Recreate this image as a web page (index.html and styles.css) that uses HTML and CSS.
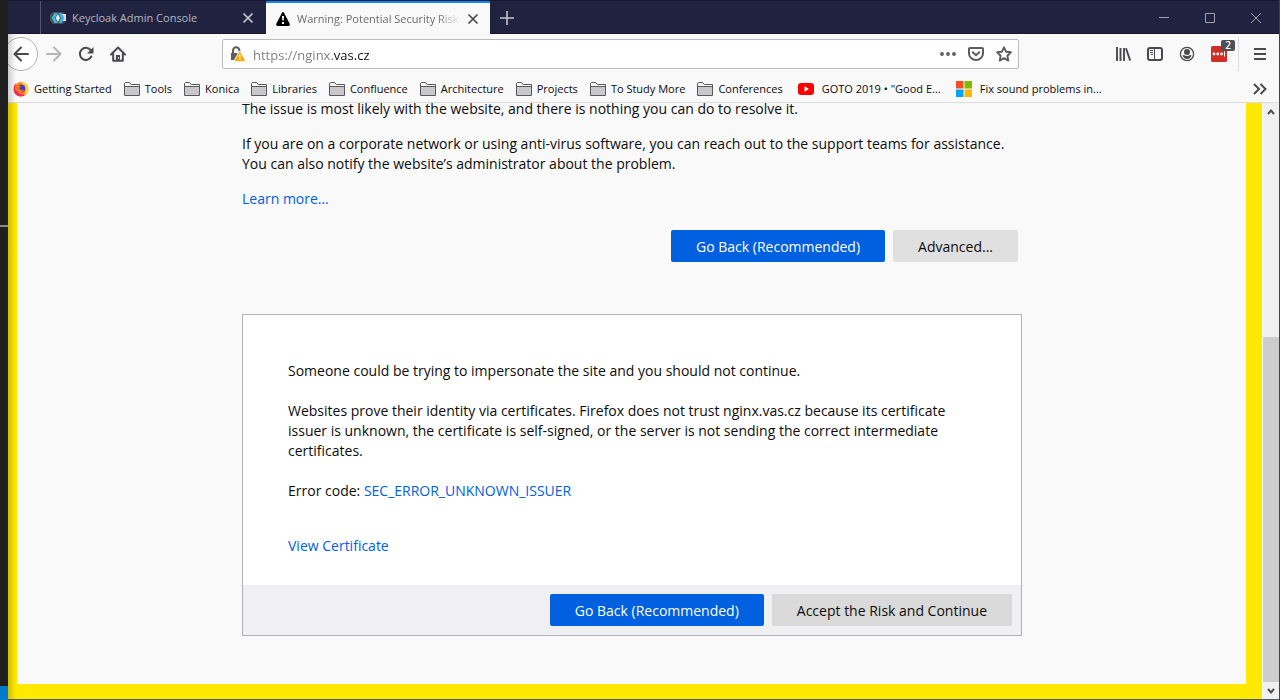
FILE: index.html
```
<!DOCTYPE html>
<html lang="en">
<head>
<meta charset="utf-8">
<title>Warning: Potential Security Risk Ahead</title>
<link rel="stylesheet" href="styles.css">
</head>
<body>
<svg class="defs" aria-hidden="true">
  <symbol id="folder" viewBox="0 0 16 16"><path d="M.5 14.500v-12l1-1h4l2 2h8v11z" fill="#c9c9cb" stroke="#59595b"/><path d="M1 3l1-1h3l2 2h8v1H1z" fill="#f9f9fa"/><path d="M.5 5.500h15" stroke="#59595b"/></symbol>
  <symbol id="close" viewBox="0 0 12 12"><path d="M1.500 1.500l9 9M10.500 1.500l-9 9" fill="none" stroke="currentColor" stroke-width="1.700"/></symbol>
</svg>
<div class="desktop"></div>
<div class="window">
  <header class="chrome">
    <div class="tabs">
      <div class="tab">
        <svg width="16" height="16" viewBox="0 0 16 16"><path d="M3 2h10l3 3v6l-3 3H3L0 11V5z" fill="#4d4d4d"/><path d="M12 4h4v7h-4z" fill="#dedede"/><path d="M4.500 3h3L5 8l2.500 5h-3L1.500 8z" fill="#35b8e5"/><path d="M8.500 3h3l3 5-3 5h-3L11 8z" fill="#35b8e5"/><path d="M7.800 4L5.700 8l2.100 4 2.300-4z" fill="#eee"/></svg>
        <span class="tab-title">Keycloak Admin Console</span>
        <button class="plain" aria-label="Close Keycloak tab"><svg width="12" height="12"><use href="#close"/></svg></button>
      </div>
      <div class="tab active">
        <svg width="14" height="14" viewBox="0 0 14 14"><path d="M5.900 1Q7-.8 8.100 1L13.700 11.700Q14.200 13.800 12.500 14H1.500Q-.2 13.800.3 11.700z" fill="#000"/><path d="M6 4h2l-.3 4.500H6.300zM6 10h2v2H6z" fill="#fff"/></svg>
        <span class="tab-title">Warning: Potential Security Risk Ahead</span>
        <button class="plain" aria-label="Close warning tab"><svg width="12" height="12"><use href="#close"/></svg></button>
      </div>
      <button class="plain new-tab" aria-label="New tab"><svg width="14" height="14" viewBox="0 0 14 14"><path d="M7 0v14M0 7h14" stroke="#c3c3cb" stroke-width="1.600"/></svg></button>
      <div class="win-controls">
        <button class="plain" aria-label="Minimize"><svg width="10" height="10" viewBox="0 0 10 10"><path d="M0 4.500h10" stroke="#a0a0aa"/></svg></button>
        <button class="plain" aria-label="Maximize"><svg width="10" height="10" viewBox="0 0 10 10"><path d="M.5.500h9v9h-9z" fill="none" stroke="#a0a0aa"/></svg></button>
        <button class="plain" aria-label="Close window"><svg width="10" height="10" viewBox="0 0 10 10"><path d="M0 0l10 10M10 0L0 10" stroke="#a0a0aa"/></svg></button>
      </div>
    </div>
    <nav class="toolbar" aria-label="Navigation">
      <div class="nav-buttons">
        <button class="plain back" aria-label="Back"><svg width="16" height="16" viewBox="0 0 16 16"><path d="M15 8H2M8 1.500L1.500 8 8 14.500" fill="none" stroke="#4a4a4c" stroke-width="2" stroke-linecap="round" stroke-linejoin="round"/></svg></button>
        <button class="plain" aria-label="Forward"><svg width="16" height="16" viewBox="0 0 16 16"><path d="M1 8h13M8 1.500L14.500 8 8 14.500" fill="none" stroke="#b5b5b6" stroke-width="2" stroke-linecap="round" stroke-linejoin="round"/></svg></button>
        <button class="plain" aria-label="Reload"><svg width="16" height="16" viewBox="0 0 16 16"><path d="M13.300 10.500A6 6 0 1 1 12.500 4" fill="none" stroke="#4a4a4c" stroke-width="2" stroke-linecap="round"/><path d="M15.500 1v6.500H9z" fill="#4a4a4c"/></svg></button>
        <button class="plain" aria-label="Home"><svg width="16" height="16" viewBox="0 0 16 16"><path d="M1 8.500L8 1.500l7 7M3.200 8v6.800h9.600V8" fill="none" stroke="#4a4a4c" stroke-width="2" stroke-linecap="round" stroke-linejoin="round"/><path d="M6 9h4v6H6z" fill="#4a4a4c"/><path d="M8 11h1v2H8z" fill="#ddd"/></svg></button>
      </div>
      <div class="urlbar">
        <svg width="16" height="16" viewBox="0 0 16 16"><path d="M3 8V4.500a3.200 3.200 0 0 1 6.400 0V6" fill="none" stroke="#5c5c5e" stroke-width="2"/><path d="M1 7h9v7H1z" fill="#5c5c5e"/><path d="M9.800 6L14.500 14.700H5.200z" fill="#f9a806" stroke="#fff" stroke-width="2.600" stroke-linejoin="round"/><path d="M9.800 6L14.500 14.700H5.200z" fill="#f9a806" stroke="#f9a806" stroke-linejoin="round"/><path d="M9.200 8.500h1.300v3.300H9.200zM9.200 12.700h1.300V14H9.200z" fill="#fff"/></svg>
        <input class="url" type="text" aria-label="Address" value="https://nginx.vas.cz">
        <button class="plain" aria-label="Page actions"><svg width="16" height="16" viewBox="0 0 16 16" fill="#5c5c5e"><circle cx="2" cy="8" r="1.900"/><circle cx="8" cy="8" r="1.900"/><circle cx="14" cy="8" r="1.900"/></svg></button>
        <button class="plain" aria-label="Save to Pocket"><svg width="16" height="16" viewBox="0 0 16 16" fill="none" stroke="#5c5c5e" stroke-width="2" stroke-linecap="round" stroke-linejoin="round"><path d="M2 2h12q1 0 1 1v4.500a7 6.500 0 0 1-14 0V3q0-1 1-1z"/><path d="M4.800 6.200L8 9.200l3.200-3"/></svg></button>
        <button class="plain" aria-label="Bookmark this page"><svg width="16" height="16" viewBox="0 0 16 16"><path d="M8 1.300l2.100 4.400 4.800.6-3.500 3.400.9 4.900L8 12.200l-4.300 2.400.9-4.900L1.100 6.300l4.800-.6z" fill="none" stroke="#5c5c5e" stroke-width="1.900" stroke-linejoin="round"/></svg></button>
      </div>
      <div class="tools">
        <button class="plain" aria-label="Library"><svg width="16" height="16" viewBox="0 0 16 16"><path d="M2 1v14M5.500 2v13M9 2v13M11 2.200L15.200 14.600" stroke="#4a4a4c" stroke-width="1.900"/></svg></button>
        <button class="plain" aria-label="Sidebars"><svg width="16" height="16" viewBox="0 0 16 16"><rect x="1" y="2" width="14" height="12" rx="2" fill="none" stroke="#4a4a4c" stroke-width="2"/><path d="M7.500 2v12M3 4.500h3M3 6.500h3M4 8.500h2" stroke="#4a4a4c"/></svg></button>
        <button class="plain" aria-label="Account"><svg width="16" height="16" viewBox="0 0 16 16"><circle cx="8" cy="8" r="6.600" fill="none" stroke="#4a4a4c" stroke-width="1.300"/><circle cx="8" cy="6" r="3" fill="#4a4a4c"/><path d="M3.500 9.500q1.500-.8 2.500 0 2 1 4 0 1-.8 2.500 0Q11 13 8 13T3.500 9.500z" fill="#4a4a4c"/></svg></button>
        <button class="plain ext" aria-label="LastPass"><svg width="16" height="16" viewBox="0 0 16 16"><rect width="16" height="16" rx="1.500" fill="#d32d27"/><g fill="#fff"><circle cx="3" cy="8" r="1.400"/><circle cx="6.800" cy="8" r="1.400"/><circle cx="10.600" cy="8" r="1.400"/><path d="M13 5.500h1v5h-1z"/></g></svg><span class="badge">2</span></button>
        <span class="divider"></span>
        <button class="plain" aria-label="Menu"><svg width="12" height="12" viewBox="0 0 12 12"><path d="M0 1h12M0 6h12M0 11h12" stroke="#4a4a4c" stroke-width="2"/></svg></button>
      </div>
    </nav>
    <nav class="bookmarks" aria-label="Bookmarks">
      <a href="#"><svg width="16" height="16" viewBox="0 0 16 16"><circle cx="8" cy="8.200" r="7.300" fill="#ff8a1c"/><path d="M2.500 2Q.3 5 .6 9q1 6 7 6.500 4 0 6.200-3-5 2-8-.5L3 7z" fill="#f5295a"/><path d="M8 .5q4.500.5 6.500 3.500 2 4.500 0 8-1.500 2-3.500 3 2.500-5 .5-8T8 .5z" fill="#ffcf33"/><circle cx="8.300" cy="7.600" r="4" fill="#4a3bb0"/><path d="M2.200 3l2.600 1.200 3.400.8-2 2q1 3 5 2-2 4-6 2T2 7z" fill="#ff7125"/></svg>Getting Started</a>
      <a href="#"><svg width="16" height="16"><use href="#folder"/></svg>Tools</a>
      <a href="#"><svg width="16" height="16"><use href="#folder"/></svg>Konica</a>
      <a href="#"><svg width="16" height="16"><use href="#folder"/></svg>Libraries</a>
      <a href="#"><svg width="16" height="16"><use href="#folder"/></svg>Confluence</a>
      <a href="#"><svg width="16" height="16"><use href="#folder"/></svg>Architecture</a>
      <a href="#"><svg width="16" height="16"><use href="#folder"/></svg>Projects</a>
      <a href="#"><svg width="16" height="16"><use href="#folder"/></svg>To Study More</a>
      <a href="#"><svg width="16" height="16"><use href="#folder"/></svg>Conferences</a>
      <a href="#" class="wide"><svg width="16" height="16" viewBox="0 0 16 16"><rect y="2" width="16" height="12" rx="3" fill="#f00"/><path d="M6.500 5.300L11 8l-4.500 2.700z" fill="#fff"/></svg>GOTO 2019 • "Good E...</a>
      <a href="#" class="wide"><svg width="16" height="16" viewBox="0 0 16 16"><path d="M0 0h7.500v7.500H0z" fill="#f25022"/><path d="M8.500 0H16v7.500H8.500z" fill="#7fba00"/><path d="M0 8.500h7.500V16H0z" fill="#00a4ef"/><path d="M8.500 8.500H16V16H8.500z" fill="#ffb900"/></svg>Fix sound problems in...</a>
      <button class="plain more" aria-label="More bookmarks"><svg width="14" height="12" viewBox="0 0 14 12"><path d="M1 1l5 5-5 5M7.500 1l5 5-5 5" fill="none" stroke="#4a4a4c" stroke-width="2"/></svg></button>
    </nav>
  </header>
  <div class="viewport">
    <main class="page">
      <div class="column">
        <p>The issue is most likely with the website, and there is nothing you can do to resolve it.</p>
        <p>If you are on a corporate network or using anti-virus software, you can reach out to the support teams for assistance. You can also notify the website’s administrator about the problem.</p>
        <p><a href="#">Learn more…</a></p>
        <div class="actions">
          <button class="btn primary">Go Back (Recommended)</button>
          <button class="btn">Advanced...</button>
        </div>
        <section class="card">
          <div class="card-body">
            <p>Someone could be trying to impersonate the site and you should not continue.</p>
            <p>Websites prove their identity via certificates. Firefox does not trust nginx.vas.cz because its certificate issuer is unknown, the certificate is self-signed, or the server is not sending the correct intermediate certificates.</p>
            <p>Error code: <a href="#">SEC_ERROR_UNKNOWN_ISSUER</a></p>
            <p class="certificate"><a href="#">View Certificate</a></p>
          </div>
          <div class="card-footer">
            <button class="btn primary">Go Back (Recommended)</button>
            <button class="btn">Accept the Risk and Continue</button>
          </div>
        </section>
      </div>
    </main>
    <div class="scrollbar">
      <svg width="8" height="6" viewBox="0 0 8 6"><path d="M1 5l3-3.500L7 5" fill="none" stroke="#505050" stroke-width="2"/></svg>
      <div class="track"><div class="thumb"></div></div>
      <svg width="8" height="6" viewBox="0 0 8 6"><path d="M1 1l3 3.500L7 1" fill="none" stroke="#505050" stroke-width="2"/></svg>
    </div>
  </div>
</div>
</body>
</html>
```
FILE: styles.css
```
* { box-sizing: border-box; }

body {
  margin: 0;
  height: 100vh;
  display: flex;
  overflow: hidden;
  font-family: "Open Sans", "Noto Sans", sans-serif;
  font-size: 14px;
  line-height: 20px;
  color: #0c0c0d;
}

svg { display: block; flex: none; }
.defs { position: absolute; width: 0; height: 0; }
a { color: #0060df; text-decoration: none; }
p { margin: 0; }

.plain {
  display: flex;
  align-items: center;
  justify-content: center;
  padding: 0;
  border: 0;
  background: none;
  color: inherit;
  font: inherit;
}

.desktop {
  width: 8px;
  background:
    linear-gradient(#007acc, #007acc) bottom / 100% 14px no-repeat,
    linear-gradient(#8d8a8c, #8d8a8c) 0 225px / 100% 2px no-repeat,
    #1f1f1f;
}

.window {
  position: relative;
  flex: 1;
  min-width: 0;
  display: flex;
  flex-direction: column;
  overflow: hidden;
  border-right: 1px solid #34436d;
  border-bottom: 1px solid #4b5c58;
}

.window::after {
  content: "";
  position: absolute;
  inset: 34px auto 0 0;
  width: 8px;
  background: linear-gradient(90deg, rgba(0, 0, 0, 0.18), rgba(0, 0, 0, 0));
  pointer-events: none;
}

.chrome {
  background: #f9f9fa;
  border-bottom: 1px solid #dcdcde;
}

.tabs {
  display: flex;
  height: 34px;
  padding: 1px 0 0 32px;
  background: #202340;
  box-shadow: inset 0 1px #17182c, inset 0 -1px #191632;
}

.tab {
  display: flex;
  align-items: center;
  gap: 6px;
  width: 226px;
  padding: 1px 12px 0 9px;
  border-left: 1px solid #52546c;
  color: #b6b7c0;
}

.tab.active {
  width: 224px;
  border-left: 0;
  border-top: 2px solid #0a84ff;
  padding: 0 11px 0 10px;
  background: #f9f9fa;
  color: #6b6b6e;
}

.tab.active .plain { color: #4a4a4c; }
.tab .plain { color: #c8c8d0; }

.tab-title {
  flex: 1;
  min-width: 0;
  overflow: hidden;
  white-space: nowrap;
  font-size: 11px;
}

.active .tab-title {
  margin-left: 1px;
  mask-image: linear-gradient(90deg, #000 calc(100% - 24px), transparent);
}

.new-tab { width: 34px; }

.win-controls {
  display: flex;
  margin-left: auto;
}

.win-controls .plain { width: 46px; }

.toolbar {
  display: flex;
  align-items: center;
  height: 41px;
  padding-bottom: 1px;
}

.nav-buttons {
  display: flex;
  align-items: center;
  gap: 16px;
  margin: 0 96px 0 -4px;
}

.back {
  width: 34px;
  height: 34px;
  margin-right: -8px;
  border: 1px solid #b1b1b3;
  border-radius: 50%;
  background: #fff;
}

.urlbar {
  flex: 1;
  min-width: 0;
  display: flex;
  align-items: center;
  gap: 12px;
  height: 30px;
  padding: 0 6px 0 7px;
  border: 1px solid #bbbbbd;
  border-radius: 2px;
  background: #fff;
}

.url {
  flex: 1;
  min-width: 0;
  margin-left: -5px;
  padding: 1px 0 0;
  border: 0;
  outline: 0;
  font-family: inherit;
  font-size: 13px;
  color: transparent;
  background: linear-gradient(90deg, #7a7a7c 81px, #0c0c0d 81px);
  background-clip: text;
}

.tools {
  display: flex;
  align-items: center;
  gap: 16px;
  margin: 0 13px 0 96px;
}

.ext { position: relative; }

.badge {
  position: absolute;
  left: 10px;
  top: -6px;
  width: 14px;
  height: 11px;
  border-radius: 2px;
  background: #4f5053;
  color: #fff;
  font-size: 10px;
  line-height: 11px;
  font-weight: 600;
  text-align: center;
}

.divider {
  width: 1px;
  height: 34px;
  margin: 0 -1px 0 -5px;
  background: #dcdcde;
}

.bookmarks {
  display: flex;
  align-items: center;
  gap: 12px;
  height: 27px;
  padding: 0 12px 0 5px;
  font-size: 11px;
  white-space: nowrap;
}

.bookmarks a {
  display: flex;
  align-items: center;
  gap: 5px;
  color: #0c0c0d;
}

.bookmarks .wide {
  gap: 8px;
  margin-left: 3px;
}

.more { margin-left: auto; }

.viewport {
  flex: 1;
  min-height: 0;
  display: flex;
  background: #fff;
}

.page {
  flex: 1;
  min-width: 0;
  display: flex;
  flex-direction: column;
  justify-content: flex-end;
  overflow: hidden;
  padding: 0 0 48px 1px;
  border: solid #ffe900;
  border-width: 0 16px 15px 9px;
  background: #f9f9fa;
}

.column {
  width: 100%;
  max-width: 780px;
  margin: 0 auto;
}

.column > p { margin-bottom: 15px; }

.actions, .card-footer {
  display: flex;
  justify-content: flex-end;
  gap: 8px;
}

.actions { margin: 21px 4px 52px 0; }

.btn {
  height: 32px;
  padding: 2px 25px 0;
  border: 0;
  border-radius: 2px;
  background: #e0e0e1;
  color: #0c0c0d;
  font: inherit;
}

.primary {
  background: #0060df;
  color: #fff;
}

.card {
  border: 1px solid #b1b1b3;
  background: #fff;
}

.card-body {
  display: flex;
  flex-direction: column;
  gap: 20px;
  padding: 46px 45px 29px;
}

.certificate { margin-top: 15px; }

.card-footer {
  padding: 9px;
  background: #f0f0f2;
}

.card-footer .btn:not(.primary) { background: #dadadb; }

.scrollbar {
  width: 16px;
  display: flex;
  flex-direction: column;
  align-items: center;
  gap: 6px;
  margin-left: 1px;
  padding: 6px 0 5px;
  background: #f0f0f0;
}

.track {
  flex: 1;
  width: 100%;
  display: flex;
  flex-direction: column;
  justify-content: flex-end;
}

.thumb {
  height: 61%;
  min-height: 345px;
  background: #cdcdcd;
}
```
